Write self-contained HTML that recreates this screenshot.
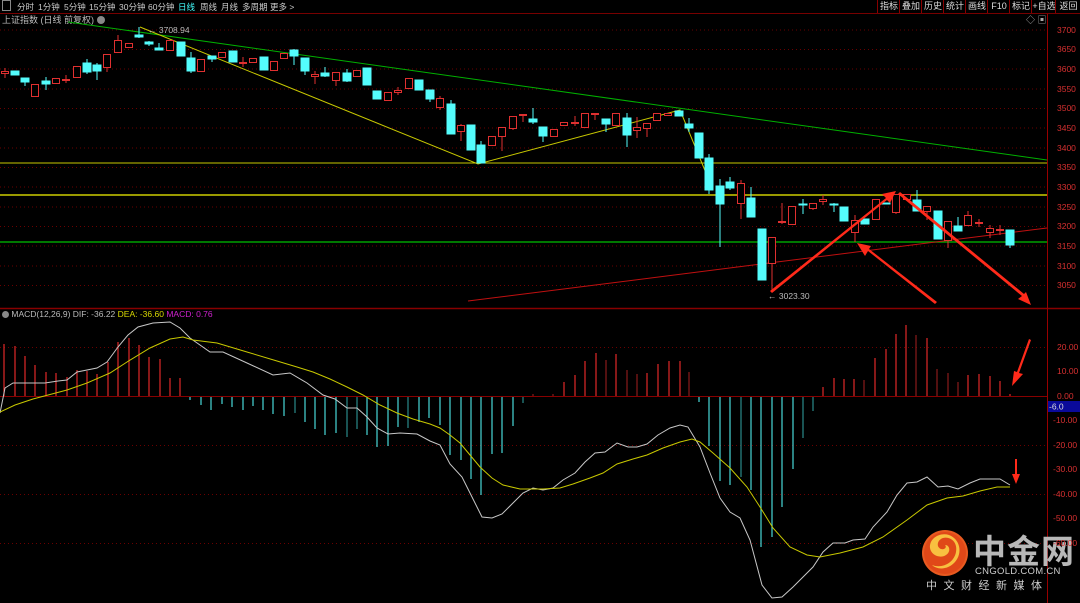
<!DOCTYPE html>
<html><head><meta charset="utf-8"><style>
html,body{margin:0;padding:0;background:#000;width:1080px;height:603px;overflow:hidden;font-family:"Liberation Sans","Noto Sans CJK SC",sans-serif}
#tb{position:absolute;left:0;top:0;width:1080px;height:13px;border-bottom:1px solid #700;font-size:8.5px;color:#ccc}
#tb span{position:absolute;top:1px;white-space:nowrap}
.rb{position:absolute;top:0;height:13px;border-left:1px solid #800;font-size:9px;color:#ddd;text-align:center;line-height:13px}
.ax{position:absolute;left:1057px;font-size:8.5px;color:#d83030}
</style></head><body>
<div id="tb">
<span style="left:2px;top:0;width:9px;height:11px;border:1px solid #888;box-sizing:border-box"></span>
<span style="left:17px">分时</span><span style="left:38px">1分钟</span><span style="left:64px">5分钟</span><span style="left:89px">15分钟</span><span style="left:119px">30分钟</span><span style="left:148px">60分钟</span><span style="left:178px;color:#4ff">日线</span><span style="left:200px">周线</span><span style="left:221px">月线</span><span style="left:242px">多周期</span><span style="left:270px">更多 &gt;</span>
</div>
<div class="rb" style="left:877px;width:22px">指标</div><div class="rb" style="left:899px;width:22px">叠加</div><div class="rb" style="left:921px;width:22px">历史</div><div class="rb" style="left:943px;width:22px">统计</div><div class="rb" style="left:965px;width:22px">画线</div><div class="rb" style="left:987px;width:22px">F10</div><div class="rb" style="left:1009px;width:22px">标记</div><div class="rb" style="left:1031px;width:24px">+自选</div><div class="rb" style="left:1055px;width:25px">返回</div>
<div style="position:absolute;left:2px;top:13px;font-size:9px;color:#bbb">上证指数 (日线 前复权) <span style="display:inline-block;width:8px;height:8px;border-radius:50%;background:#888;vertical-align:-1px"></span></div>
<div style="position:absolute;left:2px;top:309px;font-size:8.5px;color:#bbb"><span style="display:inline-block;width:7px;height:7px;border-radius:50%;background:#888;vertical-align:-1px"></span> MACD(12,26,9) DIF: -36.22 <span style="color:#d8d800">DEA: -36.60</span> <span style="color:#d020d0">MACD: 0.76</span></div>
<div style="position:absolute;left:1026px;top:13px;font-size:9px;color:#aaa">◇ ▣</div>

<svg width="1080" height="603" style="position:absolute;left:0;top:0">
<g stroke="#6a0000" stroke-dasharray="1,3" stroke-width="1">
<line x1="0" y1="30" x2="1047" y2="30"/><line x1="0" y1="49.5" x2="1047" y2="49.5"/><line x1="0" y1="69" x2="1047" y2="69"/><line x1="0" y1="89" x2="1047" y2="89"/><line x1="0" y1="108.5" x2="1047" y2="108.5"/><line x1="0" y1="128" x2="1047" y2="128"/><line x1="0" y1="148" x2="1047" y2="148"/><line x1="0" y1="167.5" x2="1047" y2="167.5"/><line x1="0" y1="187" x2="1047" y2="187"/><line x1="0" y1="207" x2="1047" y2="207"/><line x1="0" y1="226.5" x2="1047" y2="226.5"/><line x1="0" y1="246" x2="1047" y2="246"/><line x1="0" y1="266" x2="1047" y2="266"/><line x1="0" y1="285.5" x2="1047" y2="285.5"/>
<line x1="0" y1="347.5" x2="1047" y2="347.5"/><line x1="0" y1="445.5" x2="1047" y2="445.5"/><line x1="0" y1="494.5" x2="1047" y2="494.5"/><line x1="0" y1="543.5" x2="1047" y2="543.5"/>
</g>
<line x1="0" y1="308.5" x2="1080" y2="308.5" stroke="#800" stroke-width="1.5"/>
<line x1="1047.5" y1="14" x2="1047.5" y2="603" stroke="#900"/>
<line x1="0" y1="396.5" x2="1047" y2="396.5" stroke="#800"/>
<line x1="0" y1="163" x2="1047" y2="163" stroke="#c8c800"/>
<line x1="0" y1="195" x2="1047" y2="195" stroke="#9a9a00" stroke-width="2"/>
<line x1="0" y1="242" x2="1047" y2="242" stroke="#00a000" stroke-width="1.5"/>
<line x1="68" y1="22" x2="1047" y2="160" stroke="#00b000"/>
<line x1="468" y1="301" x2="1047" y2="228" stroke="#c01010"/>
<polyline points="140,27 478,164 680,110 713,190" fill="none" stroke="#c8c800"/>
<g stroke="#e03030" fill="#000">
<line x1="5" y1="68" x2="5" y2="78"/><rect x="1.5" y="71.5" width="7" height="2"/>
<line x1="35" y1="84" x2="35" y2="97"/><rect x="31.5" y="84.5" width="7" height="12"/>
<rect x="52.5" y="78.5" width="7" height="5"/>
<line x1="66" y1="75" x2="66" y2="83"/><rect x="62.5" y="79.5" width="7" height="1"/>
<rect x="73.5" y="66.5" width="7" height="11"/>
<line x1="107" y1="54" x2="107" y2="72"/><rect x="103.5" y="54.5" width="7" height="13"/>
<line x1="118" y1="35" x2="118" y2="53"/><rect x="114.5" y="40.5" width="7" height="12"/>
<rect x="125.5" y="43.5" width="7" height="4"/>
<rect x="166.5" y="40.5" width="7" height="10"/>
<rect x="197.5" y="59.5" width="7" height="12"/>
<rect x="218.5" y="52.5" width="7" height="5"/>
<line x1="243" y1="57" x2="243" y2="67"/><rect x="239.5" y="62.5" width="7" height="1"/>
<rect x="249.5" y="58.5" width="7" height="4"/>
<rect x="270.5" y="61.5" width="7" height="9"/>
<rect x="280.5" y="53.5" width="7" height="5"/>
<line x1="315" y1="71" x2="315" y2="84"/><rect x="311.5" y="74.5" width="7" height="2"/>
<line x1="336" y1="72" x2="336" y2="86"/><rect x="332.5" y="72.5" width="7" height="8"/>
<rect x="353.5" y="70.5" width="7" height="6"/>
<rect x="384.5" y="92.5" width="7" height="8"/>
<line x1="398" y1="87" x2="398" y2="95"/><rect x="394.5" y="90.5" width="7" height="2"/>
<rect x="405.5" y="78.5" width="7" height="10"/>
<line x1="440" y1="96" x2="440" y2="110"/><rect x="436.5" y="98.5" width="7" height="9"/>
<line x1="461" y1="124" x2="461" y2="141"/><rect x="457.5" y="125.5" width="7" height="6"/>
<rect x="488.5" y="136.5" width="7" height="9"/>
<line x1="502" y1="127" x2="502" y2="151"/><rect x="498.5" y="127.5" width="7" height="9"/>
<line x1="513" y1="116" x2="513" y2="130"/><rect x="509.5" y="116.5" width="7" height="12"/>
<line x1="523" y1="114" x2="523" y2="122"/><rect x="519.5" y="114.5" width="7" height="1"/>
<rect x="550.5" y="129.5" width="7" height="7"/>
<rect x="560.5" y="122.5" width="7" height="3"/>
<line x1="575" y1="116" x2="575" y2="126"/><rect x="571.5" y="122.5" width="7" height="1"/>
<rect x="581.5" y="113.5" width="7" height="14"/>
<line x1="595" y1="113" x2="595" y2="120"/><rect x="591.5" y="113.5" width="7" height="1"/>
<rect x="612.5" y="113.5" width="7" height="12"/>
<line x1="637" y1="117" x2="637" y2="138"/><rect x="633.5" y="127.5" width="7" height="3"/>
<line x1="647" y1="123" x2="647" y2="137"/><rect x="643.5" y="123.5" width="7" height="5"/>
<rect x="653.5" y="113.5" width="7" height="7"/>
<rect x="664.5" y="113.5" width="7" height="2"/>
<line x1="741" y1="180" x2="741" y2="219"/><rect x="737.5" y="183.5" width="7" height="20"/>
<line x1="772" y1="237" x2="772" y2="290"/><rect x="768.5" y="237.5" width="7" height="26"/>
<line x1="782" y1="203" x2="782" y2="224"/><rect x="778.5" y="221.5" width="7" height="1"/>
<rect x="788.5" y="206.5" width="7" height="18"/>
<line x1="813" y1="203" x2="813" y2="210"/><rect x="809.5" y="203.5" width="7" height="5"/>
<line x1="823" y1="195" x2="823" y2="205"/><rect x="819.5" y="199.5" width="7" height="2"/>
<line x1="855" y1="215" x2="855" y2="242"/><rect x="851.5" y="220.5" width="7" height="12"/>
<rect x="872.5" y="199.5" width="7" height="20"/>
<line x1="896" y1="194" x2="896" y2="214"/><rect x="892.5" y="194.5" width="7" height="18"/>
<rect x="903.5" y="194.5" width="7" height="5"/>
<line x1="927" y1="206" x2="927" y2="220"/><rect x="923.5" y="206.5" width="7" height="5"/>
<line x1="948" y1="221" x2="948" y2="248"/><rect x="944.5" y="221.5" width="7" height="19"/>
<line x1="968" y1="211" x2="968" y2="225"/><rect x="964.5" y="215.5" width="7" height="10"/>
<line x1="979" y1="219" x2="979" y2="227"/><rect x="975.5" y="222.5" width="7" height="1"/>
<line x1="990" y1="225" x2="990" y2="238"/><rect x="986.5" y="228.5" width="7" height="4"/>
<line x1="1000" y1="225" x2="1000" y2="235"/><rect x="996.5" y="229.5" width="7" height="1"/>
</g>
<g stroke="#54fcfc" fill="#54fcfc">
<rect x="11" y="71" width="8" height="4"/>
<line x1="25" y1="78" x2="25" y2="86"/><rect x="21" y="78" width="8" height="4"/>
<line x1="46" y1="77" x2="46" y2="90"/><rect x="42" y="81" width="8" height="3"/>
<line x1="87" y1="59" x2="87" y2="74"/><rect x="83" y="63" width="8" height="9"/>
<line x1="97" y1="63" x2="97" y2="80"/><rect x="93" y="65" width="8" height="6"/>
<line x1="139" y1="27" x2="139" y2="38"/><rect x="135" y="35" width="8" height="2"/>
<line x1="149" y1="41" x2="149" y2="46"/><rect x="145" y="42" width="8" height="2"/>
<line x1="159" y1="43" x2="159" y2="50"/><rect x="155" y="48" width="8" height="2"/>
<rect x="177" y="42" width="8" height="14"/>
<line x1="191" y1="52" x2="191" y2="73"/><rect x="187" y="58" width="8" height="13"/>
<line x1="212" y1="56" x2="212" y2="62"/><rect x="208" y="56" width="8" height="3"/>
<rect x="229" y="51" width="8" height="11"/>
<rect x="260" y="57" width="8" height="13"/>
<line x1="294" y1="49" x2="294" y2="65"/><rect x="290" y="50" width="8" height="6"/>
<line x1="305" y1="58" x2="305" y2="75"/><rect x="301" y="58" width="8" height="13"/>
<line x1="325" y1="67" x2="325" y2="77"/><rect x="321" y="73" width="8" height="3"/>
<line x1="347" y1="69" x2="347" y2="82"/><rect x="343" y="73" width="8" height="8"/>
<rect x="363" y="68" width="8" height="17"/>
<rect x="373" y="91" width="8" height="8"/>
<rect x="415" y="80" width="8" height="10"/>
<line x1="430" y1="90" x2="430" y2="102"/><rect x="426" y="90" width="8" height="9"/>
<line x1="451" y1="100" x2="451" y2="134"/><rect x="447" y="104" width="8" height="30"/>
<rect x="467" y="125" width="8" height="25"/>
<line x1="481" y1="141" x2="481" y2="163"/><rect x="477" y="145" width="8" height="18"/>
<line x1="533" y1="108" x2="533" y2="124"/><rect x="529" y="119" width="8" height="3"/>
<line x1="543" y1="127" x2="543" y2="142"/><rect x="539" y="127" width="8" height="9"/>
<line x1="606" y1="119" x2="606" y2="132"/><rect x="602" y="119" width="8" height="5"/>
<line x1="627" y1="113" x2="627" y2="147"/><rect x="623" y="118" width="8" height="17"/>
<rect x="675" y="111" width="8" height="5"/>
<line x1="689" y1="118" x2="689" y2="132"/><rect x="685" y="124" width="8" height="4"/>
<rect x="695" y="133" width="8" height="25"/>
<line x1="709" y1="154" x2="709" y2="194"/><rect x="705" y="158" width="8" height="32"/>
<line x1="720" y1="179" x2="720" y2="247"/><rect x="716" y="186" width="8" height="18"/>
<line x1="730" y1="177" x2="730" y2="190"/><rect x="726" y="182" width="8" height="6"/>
<line x1="751" y1="187" x2="751" y2="217"/><rect x="747" y="198" width="8" height="19"/>
<rect x="758" y="229" width="8" height="51"/>
<line x1="803" y1="199" x2="803" y2="214"/><rect x="799" y="204" width="8" height="1"/>
<line x1="834" y1="203" x2="834" y2="212"/><rect x="830" y="204" width="8" height="1"/>
<rect x="840" y="207" width="8" height="14"/>
<rect x="861" y="219" width="8" height="5"/>
<rect x="882" y="203" width="8" height="1"/>
<line x1="917" y1="190" x2="917" y2="211"/><rect x="913" y="200" width="8" height="11"/>
<rect x="934" y="211" width="8" height="28"/>
<line x1="958" y1="217" x2="958" y2="231"/><rect x="954" y="226" width="8" height="5"/>
<line x1="1010" y1="230" x2="1010" y2="248"/><rect x="1006" y="230" width="8" height="15"/>
</g>
<text x="148" y="33" fill="#bbb" font-size="8.5" font-family="Liberation Sans">← 3708.94</text>
<text x="768" y="299" fill="#bbb" font-size="8.5" font-family="Liberation Sans">← 3023.30</text>
<g stroke-width="1.2">
<path stroke="#e02828" d="M4 396V344M15 396V346M25 396V356M35 396V365M46 396V372M56 396V373M67 396V377M77 396V370M87 396V371M97 396V374M108 396V362M118 396V342M129 396V338M139 396V345M149 396V357M160 396V359M170 396V378M180 396V378M564 396V382M575 396V375M585 396V361M596 396V353M616 396V354M647 396V373M658 396V364M669 396V361M680 396V361M823 396V387M834 396V378M844 396V379M854 396V379M875 396V358M886 396V349M896 396V334M906 396V325M927 396V338M968 396V375M979 396V374M990 396V376M1000 396V381M1010 396V394"/>
<path stroke="#8a1a1a" d="M606 396V360M627 396V370M637 396V374M689 396V372M864 396V380M916 396V335M937 396V369M948 396V373M958 396V382M533 396V394M553 396V394"/>
<path stroke="#48d8d8" d="M190 397V400M201 397V405M211 397V410M222 397V404M232 397V407M243 397V410M253 397V406M263 397V410M273 397V414M284 397V416M305 397V422M315 397V429M325 397V435M336 397V433M367 397V435M377 397V447M388 397V446M398 397V427M419 397V422M429 397V418M440 397V425M450 397V455M461 397V460M471 397V479M481 397V495M492 397V454M502 397V453M513 397V426M699 397V402M709 397V446M720 397V481M730 397V485M751 397V490M761 397V547M772 397V537M782 397V507M793 397V469"/>
<path stroke="#2a8a8a" d="M295 397V413M347 397V437M357 397V429M408 397V428M523 397V403M741 397V477M803 397V438M813 397V411"/>
</g>
<polyline fill="none" stroke="#c8c8c8" stroke-width="1" points="0,413 5,388 13,383 45,383 58,381 67,380 77,372 97,368 107,362 118,347 128,335 138,327 153,323 170,322 180,328 190,338 210,352 223,352 247,363 273,375 290,373 307,383 323,395 335,399 347,408 357,408 367,417 377,428 388,434 400,433 417,434 430,441 440,445 450,464 462,477 472,497 482,517 492,518 502,514 513,503 523,493 533,488 543,490 553,488 563,480 575,473 585,462 595,453 605,452 617,443 628,447 637,447 647,444 658,435 670,428 680,425 688,427 700,447 710,473 720,498 730,512 740,518 750,540 762,585 772,598 782,597 793,587 813,567 823,552 833,543 845,543 853,540 865,539 873,527 887,512 897,495 907,483 917,482 927,477 938,487 948,486 958,489 970,483 980,479 1000,479 1010,485"/>
<polyline fill="none" stroke="#c8c800" stroke-width="1" points="0,412 15,405 33,399 67,390 87,383 110,373 127,362 150,348 170,339 183,337 193,340 217,343 247,352 277,361 297,367 313,372 330,379 347,387 363,395 380,405 397,413 413,419 430,424 440,428 450,435 460,443 470,455 480,467 492,478 503,485 520,489 543,489 560,488 573,484 590,478 603,473 617,464 633,459 647,455 663,448 680,442 692,439 700,442 713,453 730,468 747,487 760,507 773,528 790,547 807,555 820,557 840,553 863,547 883,537 907,520 927,505 947,498 963,496 980,491 997,487 1010,487"/>
<g fill="#ff2a1a" stroke="none">
<polygon points="770,291 886,198 882,194 896,191 890,203 887,200 772,293"/>
<polygon points="935,304 868,251 865,256 857,243 871,246 869,249 937,302"/>
<polygon points="898,194 1022,296 1018,299 1031,305 1026,292 1024,294 900,192"/>
<polygon points="1031,340 1019,373 1023,374 1012,386 1014,371 1017,372 1029,339"/>
<polygon points="1015,459 1017,459 1017,474 1020,474 1016,484 1012,474 1015,474"/>
</g>
<rect x="1048" y="401" width="32" height="11" fill="#0a0a9a"/>
<text x="1049" y="409.5" fill="#ddd" font-size="8.5" font-family="Liberation Sans">-6.0</text>
<circle cx="945" cy="553" r="23" fill="#e85a20"/>
<circle cx="945" cy="553" r="21" fill="#e04818"/>
<path d="M932 565c10 4 22-2 24-13 2-10-6-16-13-14-6 2-7 9-2 11 4 1 6-2 4-4 5 0 6 7 1 10-6 4-15 0-16-7-1-9 9-16 19-13 11 4 14 18 6 27-7 8-18 8-23 3z" fill="#f8c040"/>
</svg>
<div style="position:absolute;left:973px;top:529px;font-size:33px;font-weight:bold;color:#b8b8b8;font-family:'Noto Sans CJK SC',sans-serif;letter-spacing:1px;line-height:40px">中金网</div>
<div style="position:absolute;left:975px;top:566px;font-size:9.5px;color:#ccc;letter-spacing:0.3px">CNGOLD.COM.CN</div>
<div style="position:absolute;left:926px;top:577px;font-size:11px;color:#ccc;letter-spacing:6.5px;font-family:'Noto Sans CJK SC',sans-serif">中文财经新媒体</div>

<div class="ax" style="top:25px">3700</div><div class="ax" style="top:44px">3650</div><div class="ax" style="top:64px">3600</div><div class="ax" style="top:84px">3550</div><div class="ax" style="top:103px">3500</div><div class="ax" style="top:123px">3450</div><div class="ax" style="top:143px">3400</div><div class="ax" style="top:162px">3350</div><div class="ax" style="top:182px">3300</div><div class="ax" style="top:202px">3250</div><div class="ax" style="top:221px">3200</div><div class="ax" style="top:241px">3150</div><div class="ax" style="top:261px">3100</div><div class="ax" style="top:280px">3050</div>
<div class="ax" style="top:342px">20.00</div><div class="ax" style="top:366px">10.00</div><div class="ax" style="top:391px">0.00</div><div class="ax" style="top:415px;left:1053px">-10.00</div><div class="ax" style="top:440px;left:1053px">-20.00</div><div class="ax" style="top:464px;left:1053px">-30.00</div><div class="ax" style="top:489px;left:1053px">-40.00</div><div class="ax" style="top:513px;left:1053px">-50.00</div><div class="ax" style="top:538px;left:1053px">-60.00</div>
</body></html>
